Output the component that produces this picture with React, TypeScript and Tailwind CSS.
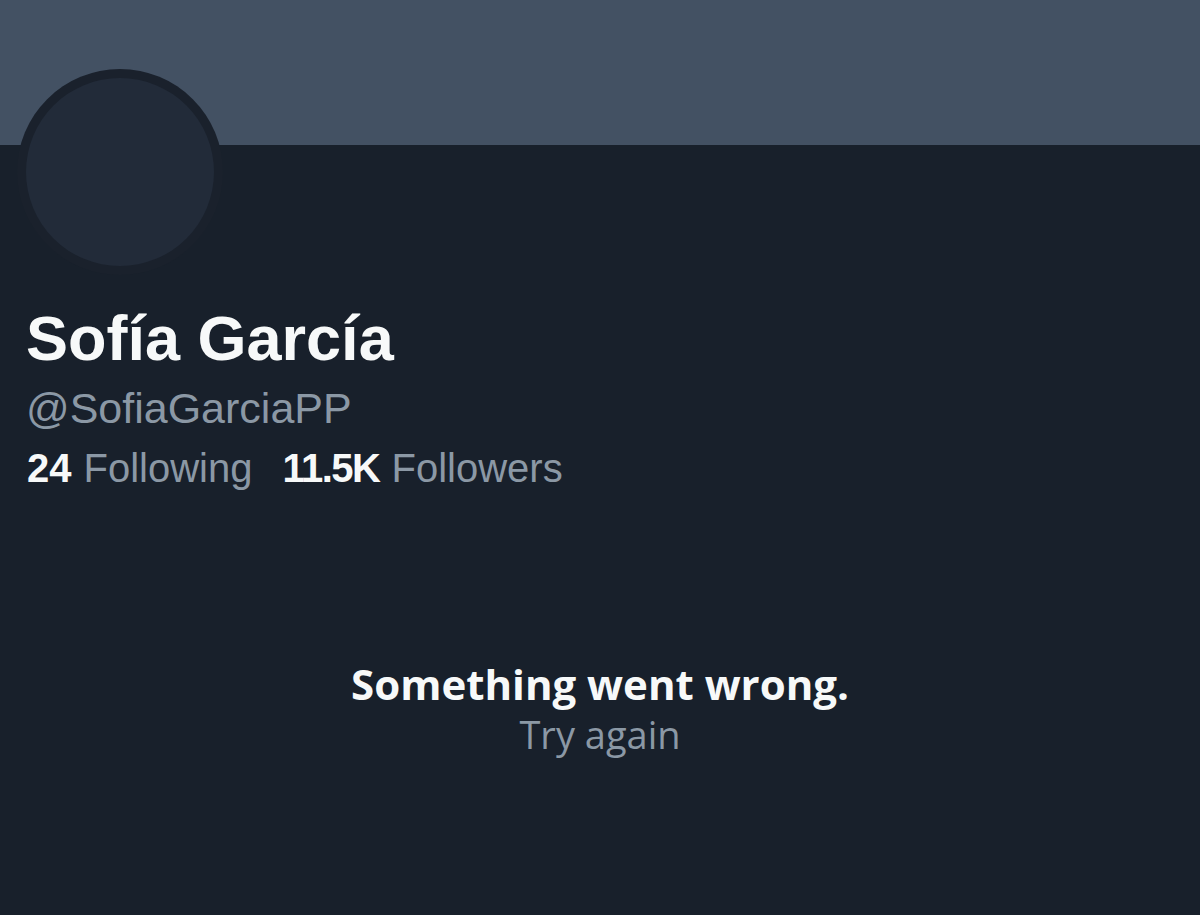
import React from "react";

export default function App() {
  return (
    <div className="w-[1200px] h-[915px] bg-[#18202b] overflow-hidden" style={{ fontFamily: '"Liberation Sans", Arial, sans-serif' }}>
      <div className="h-[145px] bg-[#435163]" />
      <div className="pl-[17px] -mt-[76px]">
        <div className="w-[206px] h-[206px] rounded-full bg-[#1a212c] p-[9px]">
          <div className="w-full h-full rounded-full bg-[#222b39]" />
        </div>
      </div>
      <div className="pl-[26px] mt-[28px]">
        <div className="text-[63px] font-bold leading-[70px] text-[#f7f9f9]">Sofía García</div>
        <div className="text-[43px] leading-[50px] mt-[10px] text-[#8b98a5]">@SofiaGarciaPP</div>
        <div className="text-[40px] leading-[50px] mt-[10px] text-[#8b98a5] flex gap-[30px]">
          <span className="flex"><span className="font-bold text-[#f7f9f9] ml-[1px]">24</span><span className="ml-[12px]">Following</span></span>
          <span className="flex"><span className="font-bold text-[#f7f9f9] tracking-[-1.5px]">11.5K</span><span className="ml-[12px]">Followers</span></span>
        </div>
      </div>
      <div className="mt-[165px] flex flex-col items-center" style={{ fontFamily: '"Open Sans", sans-serif' }}>
        <div className="text-[42px] font-bold leading-[52px] text-[#f7f9f9]">Something went wrong.</div>
        <div className="text-[38px] leading-[48px] text-[#8b98a5]">Try again</div>
      </div>
    </div>
  );
}
